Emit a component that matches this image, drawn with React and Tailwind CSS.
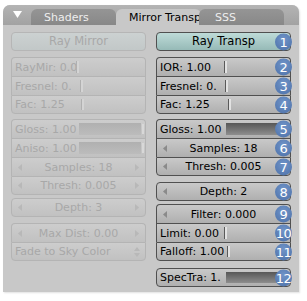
import React from "react";

function Badge({ n }) {
  return (
    <div className="absolute right-[-2px] top-1/2 -translate-y-1/2 z-10 w-[17px] h-[17px] rounded-full bg-[radial-gradient(circle_at_50%_35%,#7094c8,#4c70a8)] text-white text-[13px] leading-none flex items-center justify-center tracking-[-0.5px]">
      {n}
    </div>
  );
}

const rowBase = "relative h-[19px] flex items-center";

function rowBorder(pos, disabled) {
  const c = disabled ? "border-[#b4b4b4]" : "border-[#505050]";
  if (pos === "single") return `${c} border rounded-[4px]`;
  if (pos === "first") return `${c} border-x border-t rounded-t-[4px]`;
  if (pos === "mid") return `${c} border-x border-t`;
  return `${c} border rounded-b-[4px]`;
}

function bg(disabled) {
  return disabled
    ? "bg-linear-to-b from-[#cdcdcd] to-[#c1c1c1] text-[#a8a8a8]"
    : "bg-linear-to-b from-[#c9c9c9] to-[#afafaf] text-black";
}

function Slider({ label, labelW, thumb, full, disabled, pos, n }) {
  return (
    <div className={`${rowBase} ${rowBorder(pos, disabled)} ${bg(disabled)}`}>
      <div className="h-full flex items-center overflow-hidden whitespace-nowrap pl-[3px] shrink-0" style={{ width: labelW }}>
        {label}
      </div>
      <div className="relative flex-1 h-full">
        {full ? (
          <div className={`absolute left-[2px] right-[4px] top-[3px] bottom-[3px] ${disabled ? "bg-linear-to-b from-[#b0b0b0] to-[#bcbcbc]" : "bg-linear-to-b from-[#575757] to-[#8e8e8e]"}`}>
            <div className={`absolute right-[-3px] top-[1px] bottom-[1px] w-[2px] ${disabled ? "bg-[#d8d8d8]" : "bg-[#d0d0d0]"}`} />
          </div>
        ) : (
          <div
            className={`absolute top-[3px] bottom-[3px] w-[3px] border-l ${disabled ? "border-[#b0b0b0] bg-[#d4d4d4]" : "border-[#5a5a5a] bg-[#e2e2e2]"}`}
            style={{ left: thumb }}
          />
        )}
      </div>
      {n && <Badge n={n} />}
    </div>
  );
}

function Arrow({ dir, disabled }) {
  const c = disabled ? "#b8b8b8" : "#8a8a8a";
  return (
    <svg width="4" height="7" viewBox="0 0 4 7" className="shrink-0">
      {dir === "l" ? <path d="M4 0V7L0 3.5Z" fill={c} /> : <path d="M0 0V7L4 3.5Z" fill={c} />}
    </svg>
  );
}

function Num({ label, disabled, pos, n }) {
  return (
    <div className={`${rowBase} ${rowBorder(pos, disabled)} ${bg(disabled)} px-[6px] justify-between`}>
      <Arrow dir="l" disabled={disabled} />
      <span className="whitespace-nowrap">{label}</span>
      <Arrow dir="r" disabled={disabled} />
      {n && <Badge n={n} />}
    </div>
  );
}

function Dropdown({ label, disabled, pos }) {
  return (
    <div className={`${rowBase} ${rowBorder(pos, disabled)} ${bg(disabled)} pl-[3px] pr-[5px] justify-between`}>
      <span className="whitespace-nowrap">{label}</span>
      <svg width="6" height="10" viewBox="0 0 6 10">
        <path d="M0 4L3 0L6 4Z M0 6L3 10L6 6Z" fill="#b8b8b8" />
      </svg>
    </div>
  );
}

function Toggle({ label, disabled, n }) {
  return (
    <div
      className={`${rowBase} justify-center border rounded-[4px] ${
        disabled
          ? "border-[#b6b6b6] bg-linear-to-b from-[#ccd1d1] to-[#c2c8c8] text-[#a8a8a8]"
          : "border-[#505050] bg-linear-to-b from-[#bedbd8] to-[#96bab7] text-black"
      }`}
    >
      <span className="text-[11.5px]">{label}</span>
      {n && <Badge n={n} />}
    </div>
  );
}

function Tab({ children, active, className = "" }) {
  return (
    <div
      className={`h-[16px] w-[85px] rounded-t-[6px] whitespace-nowrap flex items-center pl-[13px] text-[11px] ${
        active ? "bg-[#c8c8c8] text-black" : "bg-linear-to-b from-[#959595] to-[#888888] text-[#eeeeee] overflow-hidden"
      } ${className}`}
    >
      {children}
    </div>
  );
}

export default function App() {
  return (
    <div className="w-[307px] h-[301px] bg-white font-['DejaVu_Sans',sans-serif] text-[11px] leading-none pt-[5px] pl-[3px] overflow-hidden">
      <div className="w-[296px] h-[287px] bg-[#c8c8c8] rounded-t-[7px] flex flex-col shadow-[1px_1px_2px_rgba(0,0,0,0.12)]">
        <div className="relative h-[20px] shrink-0 bg-linear-to-b from-[#b4b4b4] to-[#a2a2a2] rounded-t-[7px] flex items-end">
          <svg className="absolute left-[10px] top-[6px]" width="9" height="7" viewBox="0 0 9 7">
            <path d="M0 0H9L4.5 7Z" fill="#ffffff" />
          </svg>
          <div className="ml-[28px] flex items-end">
            <Tab className="w-[83px]">Shaders</Tab>
            <Tab active>Mirror Transp</Tab>
            <Tab className="-ml-[2px] z-10 pl-[16px]">SSS</Tab>
          </div>
        </div>

        <div className="flex gap-[10px] px-[8px] pt-[7px]">
          <div className="w-[137px] flex flex-col">
            <Toggle label="Ray Mirror" disabled />
            <div className="mt-[6px]">
              <Slider label="RayMir: 0.0" labelW={64} thumb={0} disabled pos="first" />
              <Slider label="Fresnel: 0." labelW={64} thumb={4} disabled pos="mid" />
              <Slider label="Fac: 1.25" labelW={64} thumb={5} disabled pos="last" />
            </div>
            <div className="mt-[5px]">
              <Slider label="Gloss: 1.00" labelW={65} full disabled pos="first" />
              <Slider label="Aniso: 1.00" labelW={65} full disabled pos="mid" />
              <Num label="Samples: 18" disabled pos="mid" />
              <Num label="Thresh: 0.005" disabled pos="last" />
            </div>
            <div className="mt-[3px]">
              <Num label="Depth: 3" disabled pos="single" />
            </div>
            <div className="mt-[6px]">
              <Num label="Max Dist: 0.00" disabled pos="first" />
              <Dropdown label="Fade to Sky Color" disabled pos="last" />
            </div>
          </div>

          <div className="w-[137px] flex flex-col">
            <Toggle label="Ray Transp" n="1" />
            <div className="mt-[6px]">
              <Slider label="IOR: 1.00" labelW={67} thumb={0} pos="first" n="2" />
              <Slider label="Fresnel: 0." labelW={67} thumb={1} pos="mid" n="3" />
              <Slider label="Fac: 1.25" labelW={67} thumb={4} pos="last" n="4" />
            </div>
            <div className="mt-[5px]">
              <Slider label="Gloss: 1.00" labelW={67} full pos="first" n="5" />
              <Num label="Samples: 18" pos="mid" n="6" />
              <Num label="Thresh: 0.005" pos="last" n="7" />
            </div>
            <div className="mt-[6px]">
              <Num label="Depth: 2" pos="single" n="8" />
            </div>
            <div className="mt-[3px]">
              <Num label="Filter: 0.000" pos="first" n="9" />
              <Slider label="Limit: 0.00" labelW={67} thumb={0} pos="mid" n="10" />
              <Slider label="Falloff: 1.00" labelW={67} thumb={3} pos="last" n="11" />
            </div>
            <div className="mt-[7px]">
              <Slider label="SpecTra: 1." labelW={67} full pos="single" n="12" />
            </div>
          </div>
        </div>
      </div>
    </div>
  );
}
